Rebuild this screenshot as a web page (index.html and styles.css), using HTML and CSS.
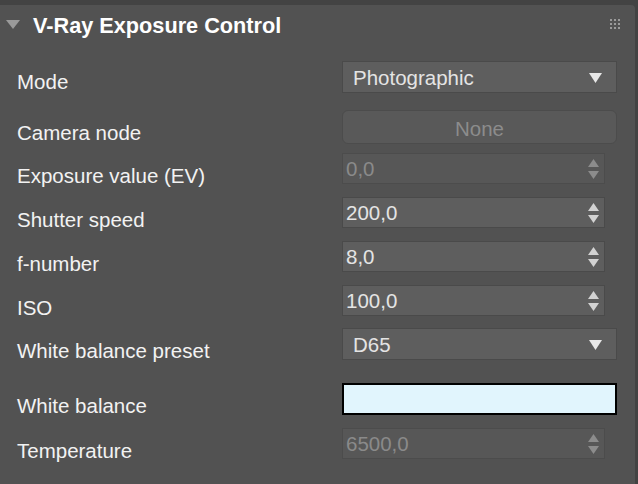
FILE: index.html
```html
<!DOCTYPE html>
<html lang="en">
  <head>
    <meta charset="UTF-8" />
    <meta name="viewport" content="width=device-width, initial-scale=1.0" />
    <title>V-Ray Exposure Control</title>
    <link rel="stylesheet" href="styles.css">
  </head>
  <body>
    <div class="rollout">
      <div class="rollout-head">
        <span class="twisty"></span>
        <span class="title">V-Ray Exposure Control</span>
        <svg class="grip" width="11" height="11" viewBox="0 0 11 11">
          <rect x="0" y="0" width="2" height="2" /><rect x="4" y="0" width="2" height="2" /><rect x="8" y="0" width="2" height="2" />
          <rect x="0" y="4" width="2" height="2" /><rect x="4" y="4" width="2" height="2" /><rect x="8" y="4" width="2" height="2" />
          <rect x="0" y="8" width="2" height="2" /><rect x="4" y="8" width="2" height="2" /><rect x="8" y="8" width="2" height="2" />
        </svg>
      </div>

      <div class="params">
        <div class="label first">Mode</div>
        <div class="combo">
          <span>Photographic</span>
          <svg class="drop" width="13" height="10" viewBox="0 0 13 10"><polygon points="0,0 13,0 6.5,10" /></svg>
        </div>

        <div class="label">Camera node</div>
        <div class="button">None</div>

        <div class="label">Exposure value (EV)</div>
        <div class="spinner off">
          <span>0,0</span>
          <svg class="arrows" width="11" height="20" viewBox="0 0 11 20"><polygon points="0,8 5.5,0 11,8" /><polygon points="0,12 11,12 5.5,20" /></svg>
        </div>

        <div class="label">Shutter speed</div>
        <div class="spinner">
          <span>200,0</span>
          <svg class="arrows" width="11" height="20" viewBox="0 0 11 20"><polygon points="0,8 5.5,0 11,8" /><polygon points="0,12 11,12 5.5,20" /></svg>
        </div>

        <div class="label">f-number</div>
        <div class="spinner">
          <span>8,0</span>
          <svg class="arrows" width="11" height="20" viewBox="0 0 11 20"><polygon points="0,8 5.5,0 11,8" /><polygon points="0,12 11,12 5.5,20" /></svg>
        </div>

        <div class="label">ISO</div>
        <div class="spinner">
          <span>100,0</span>
          <svg class="arrows" width="11" height="20" viewBox="0 0 11 20"><polygon points="0,8 5.5,0 11,8" /><polygon points="0,12 11,12 5.5,20" /></svg>
        </div>

        <div class="label">White balance preset</div>
        <div class="combo">
          <span>D65</span>
          <svg class="drop" width="13" height="10" viewBox="0 0 13 10"><polygon points="0,0 13,0 6.5,10" /></svg>
        </div>

        <div class="label">White balance</div>
        <div class="swatch"></div>

        <div class="label">Temperature</div>
        <div class="spinner off">
          <span>6500,0</span>
          <svg class="arrows" width="11" height="20" viewBox="0 0 11 20"><polygon points="0,8 5.5,0 11,8" /><polygon points="0,12 11,12 5.5,20" /></svg>
        </div>
      </div>
    </div>
  </body>
</html>
```

FILE: styles.css
```css
* {
  margin: 0;
  padding: 0;
  box-sizing: border-box;
}
body {
  background: #434343;
  font-family: "Liberation Sans", Arial, sans-serif;
  color: #f2f2f2;
  height: 484px;
  overflow: hidden;
  padding-top: 5px;
}
.rollout {
  width: 635px;
  height: 479px;
  background: #525252;
  border-top-right-radius: 4px;
}
.rollout-head {
  display: flex;
  align-items: center;
  height: 41px;
  padding: 0 14px 0 6px;
}
.twisty {
  width: 0;
  height: 0;
  border-left: 7px solid transparent;
  border-right: 7px solid transparent;
  border-top: 9px solid #9a9a9a;
  margin-top: -3px;
}
.title {
  font-weight: bold;
  font-size: 21.7px;
  line-height: 26px;
  color: #fff;
  margin-left: 13px;
  flex: 1;
}
.grip {
  fill: #9a9a9a;
  margin-top: -2px;
}

.params {
  display: grid;
  grid-template-columns: 325px 275px;
  grid-template-rows: 49px 43px 44px 44px 44px 43px 55px 45px 40px;
  align-items: start;
  padding: 15px 0 0 17px;
}
.label {
  font-size: 20.5px;
  line-height: 20px;
  padding-top: 13px;
}
.label.first {
  padding-top: 11px;
}

.combo,
.spinner {
  display: flex;
  align-items: center;
  font-size: 20.5px;
  line-height: 20px;
  color: #e4e4e4;
  background: #5e5e5e;
  border: 1px solid #4a4a4a;
}
.combo {
  height: 32px;
  padding: 2px 14px 0 10px;
}
.combo span,
.spinner span {
  flex: 1;
}
.drop {
  fill: #e8e8e8;
}
.spinner {
  width: 263px;
  height: 31px;
  padding: 0 5px 0 3px;
}
.arrows {
  fill: #d2d2d2;
}
.spinner.off {
  background: #575757;
  border-color: #4c4c4c;
  color: #8a8a8a;
}
.spinner.off .arrows {
  fill: #8c8c8c;
}
.button {
  height: 34px;
  border: 1px solid #4c4c4c;
  border-radius: 6px;
  background: #595959;
  color: #8c8c8c;
  font-size: 20.5px;
  line-height: 20px;
  text-align: center;
  padding-top: 8px;
}
.swatch {
  height: 32px;
  border: 2px solid #000;
  background: #e1f5fd;
}
```
